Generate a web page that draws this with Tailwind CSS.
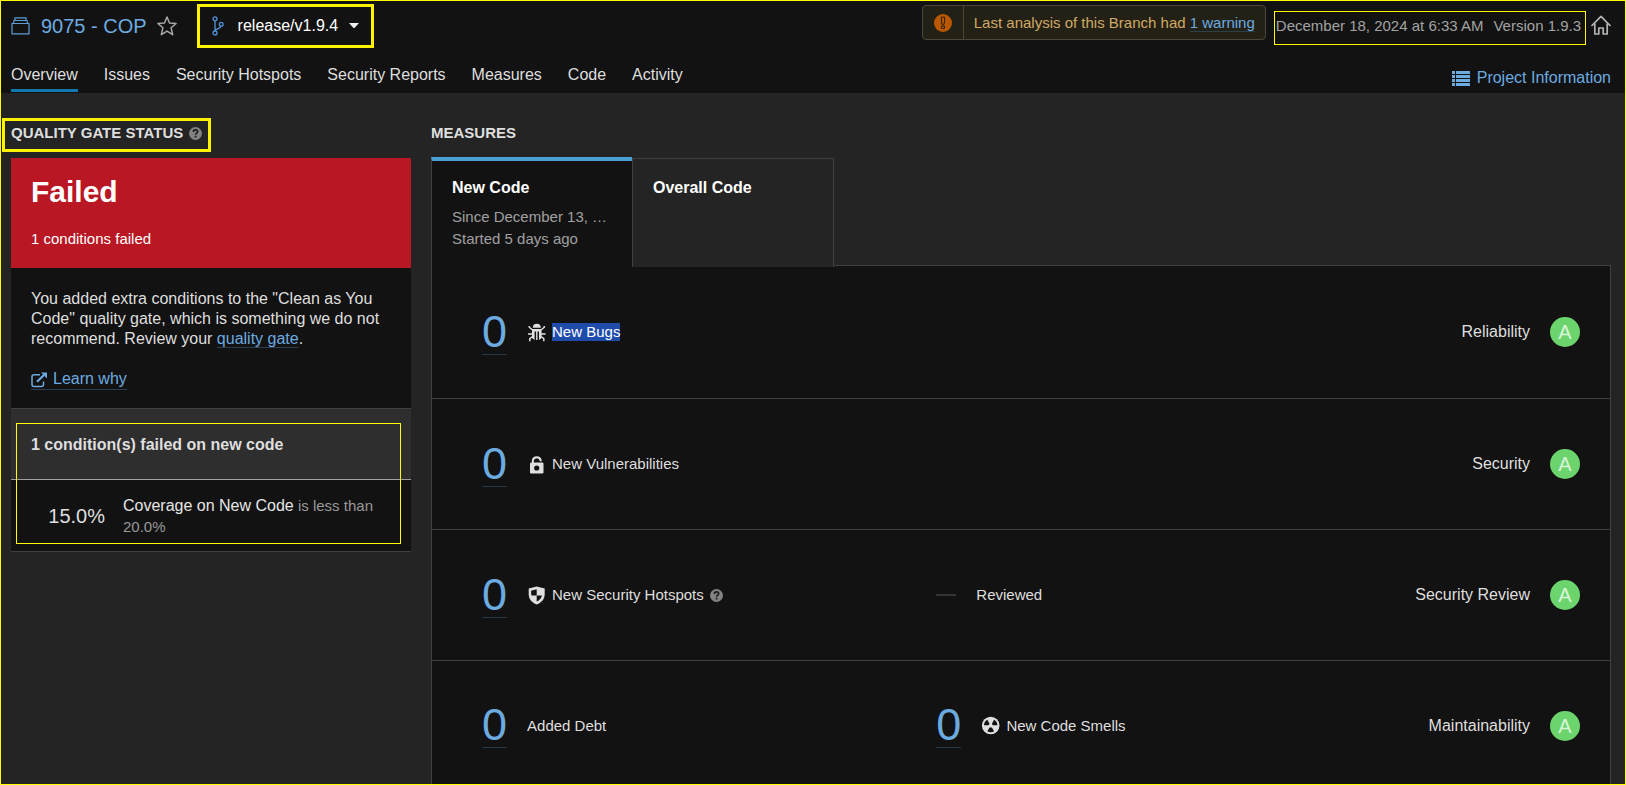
<!DOCTYPE html>
<html lang="en">
<head>
<meta charset="utf-8">
<meta name="viewport" content="width=device-width, initial-scale=1">
<title>9075 - COP</title>
<script src="https://cdn.jsdelivr.net/npm/@tailwindcss/browser@4"></script>
</head>
<body class="bg-[#242424] font-['Liberation_Sans',Arial,sans-serif] text-base text-[#dfdfdf]">
<svg class="hidden" aria-hidden="true">
  <symbol id="help" viewBox="0 0 13 13">
    <circle cx="6.5" cy="6.5" r="6.5" fill="#828282"/>
    <path d="M4.4 4.9C4.4 3.6 5.3 2.9 6.5 2.9S8.7 3.7 8.7 4.7C8.7 6.1 6.6 6.1 6.6 7.7" fill="none" stroke="#1c1c1c" stroke-width="1.6"/>
    <path d="M5.7 8.8h1.8v1.7H5.7z" fill="#1c1c1c"/>
  </symbol>
</svg>
<div class="flex min-h-screen flex-col border border-[#ffff00]">
  <header class="bg-[#121212] px-2.5">
    <div class="flex h-12 justify-between">
      <div class="flex h-[49px] items-center">
        <svg class="mr-[11px] h-[18px] w-[19px]" viewBox="0 0 19 18" fill="none" stroke="#5d9bd3" stroke-width="1.2">
          <path d="M1 6.5h17v10.4H1zM2.4 6.500L3 3.500h13l.6 3M4 3.500V.8h11v2.700"/>
        </svg>
        <a href="#" class="text-xl text-[#6cabe0]">9075 - COP</a>
        <button type="button" aria-label="Add to favorites" class="ml-2.5">
          <svg class="size-5" viewBox="0 0 20 20" fill="none" stroke="#a8a8a8" stroke-width="1.5" stroke-linejoin="round">
            <path d="M10 1l2.5 6 6.600.5-5 4.300 1.600 6.900L10 15.100l-5.700 3.600 1.600-6.900-5-4.300L7.500 7z"/>
          </svg>
        </button>
        <button type="button" class="ml-5 flex h-11 items-center border-[3px] border-[#fff200] px-3">
          <svg class="mr-3.5 h-5 w-3" viewBox="0 0 12 20" fill="none" stroke="#4f93d8" stroke-width="1.300">
            <circle cx="3" cy="2.800" r="2"/><circle cx="3" cy="17" r="2"/><circle cx="9.200" cy="8.300" r="1.900"/>
            <path d="M3 4.800V15M9 10.200C8.600 13 4.500 12.300 3.200 14.800"/>
          </svg>
          <span class="text-white">release/v1.9.4</span>
          <svg class="ml-[11px] h-[5px] w-[10px]" viewBox="0 0 10 5" fill="#f0f0f0"><path d="M0 0h10L5.500 5h-1z"/></svg>
        </button>
      </div>
      <div class="flex items-start text-[15px]">
        <div class="mt-1 flex h-[35px] rounded-sm border border-[#4b483a] bg-[#232015]">
          <div class="flex w-[41px] items-center justify-center border-r border-[#4b483a]">
            <svg class="size-[18px]" viewBox="0 0 18 18"><circle cx="9" cy="9" r="9" fill="#b95800"/><path d="M7.300 3.200h3.400L10.200 10.300H7.800zM7.600 12h2.800v2.400H7.600z" fill="none" stroke="#2a1c0c" stroke-width="1"/></svg>
          </div>
          <p class="px-2.5 pt-2 leading-[18px] text-[#d0a964]">Last analysis of this Branch had <a href="#" class="inline-block border-b border-[#2b414a] leading-[17px] text-[#6cabe0]">1 warning</a></p>
        </div>
        <div class="mt-2.5 ml-2 flex h-[34px] gap-2.5 border border-[#ffff00] pt-[5px] pr-1 pl-px leading-[18px] text-[#a3a3a3]">
          <time datetime="2024-12-18T06:33">December 18, 2024 at 6:33 AM</time>
          <span>Version 1.9.3</span>
        </div>
        <a href="#" aria-label="Home" class="mt-3.5 mr-1 ml-[5px]">
          <svg class="size-5" viewBox="0 0 20 20" fill="none" stroke="#b4b4b4" stroke-width="1.700" stroke-linejoin="round" stroke-linecap="round">
            <path d="M1 10.500L10 1.300l9 9.200M3.800 8.500V19h4v-6h4.400v6h4V8.500"/>
          </svg>
        </a>
      </div>
    </div>
    <div class="flex h-11 items-end justify-between pb-px">
      <nav class="flex gap-[26px] leading-[18px]">
        <a href="#" aria-current="page" class="border-b-[3px] border-[#1279b0] pb-[5px]">Overview</a>
        <a href="#">Issues</a>
        <a href="#">Security Hotspots</a>
        <a href="#">Security Reports</a>
        <a href="#">Measures</a>
        <a href="#">Code</a>
        <a href="#">Activity</a>
      </nav>
      <a href="#" class="mr-1 flex items-center gap-[7px] pb-[5px] leading-[18px] text-[#6cabe0]">
        <svg class="h-[15px] w-[18px]" viewBox="0 0 18 15" fill="#6cabe0"><path d="M0 0h3v3H0zM4 0h14v3H4zM0 4h3v3H0zM4 4h14v3H4zM0 8h3v3H0zM4 8h14v3H4zM0 12h3v3H0zM4 12h14v3H4z"/></svg>
        Project Information
      </a>
    </div>
  </header>

  <main class="flex flex-1 gap-5 pr-3.5 pl-2.5">
    <section class="w-[400px] shrink-0 pt-[25px]">
      <h2 class="-ml-[9px] flex h-[34px] w-[209px] items-center gap-1.5 border-[3px] border-[#fff200] pb-1 pl-1.5 text-[15px] leading-[18px] font-bold whitespace-nowrap">QUALITY GATE STATUS
        <svg class="size-[13px] shrink-0"><use href="#help"/></svg>
      </h2>
      <div class="mt-1.5 h-[110px] bg-[#b81723] px-5 pt-4 text-white">
        <p class="text-[30px] leading-9 font-bold">Failed</p>
        <p class="mt-5 text-[15px] leading-[18px]">1 conditions failed</p>
      </div>
      <div class="bg-[#121212] px-5 pt-[21px] pb-[18px] leading-5">
        <p>You added extra conditions to the "Clean as You Code" quality gate, which is something we do not recommend. Review your <a href="#" class="border-b border-[#2b3f54] text-[#6cabe0]">quality gate</a>.</p>
        <div class="mt-5 flex">
          <a href="#" class="flex items-center gap-1.5 border-b border-[#2b3f54] text-[#6cabe0]">
            <svg class="mt-0.5 size-4" viewBox="0 0 16 16" fill="none" stroke="#6cabe0" stroke-width="1.500"><path d="M9 2.800H3A2 2 0 0 0 1 4.800V12.500A2 2 0 0 0 3 14.500H10.500A2 2 0 0 0 12.500 12.500V9.500"/><path d="M6 9.800L13 3" stroke-width="2.200"/><path d="M10 .6h6v6z" fill="#6cabe0" stroke="none"/></svg>
            Learn why
          </a>
        </div>
      </div>
      <div class="relative">
        <h3 class="border-t border-b border-t-[#404040] border-b-[#a0a0a0] bg-[#2e2e2e] px-5 pt-[26px] pb-6 leading-5 font-bold">1 condition(s) failed on new code</h3>
        <div class="flex items-center border-b border-[#404040] bg-[#121212] pt-[15px] pr-5 pb-3.5">
          <span class="w-[94px] shrink-0 text-right text-xl">15.0%</span>
          <p class="ml-[18px] text-[15px] leading-[21px] text-[#999999]"><span class="text-base leading-[21px] text-[#e6e6e6]">Coverage on New Code</span> is less than 20.0%</p>
        </div>
        <div class="pointer-events-none absolute top-[15px] right-2.5 bottom-2 left-[5px] border border-[#ffff00]"></div>
      </div>
    </section>

    <section class="flex min-w-0 flex-1 flex-col">
      <h2 class="mt-[31px] mb-[15px] text-[15px] leading-[18px] font-bold">MEASURES</h2>
      <div role="tablist" class="relative z-10 -mb-0.5 flex h-[110px] items-end">
        <button type="button" role="tab" aria-selected="true" class="flex h-[110px] w-[201px] flex-col border-t-4 border-l border-t-[#4b9fd5] border-l-[#404040] bg-[#121212] px-5 pt-[18px] text-left">
          <span class="leading-[18px] font-bold text-white">New Code</span>
          <span class="mt-[9px] text-[15px] leading-[22px] text-[#a0a0a0]">Since December 13, …</span>
          <span class="text-[15px] leading-[22px] text-[#a0a0a0]">Started 5 days ago</span>
        </button>
        <button type="button" role="tab" aria-selected="false" class="flex h-[109px] w-[202px] border border-b-0 border-[#404040] bg-[#242424] px-5 pt-5 text-left">
          <span class="leading-[18px] font-bold text-white">Overall Code</span>
        </button>
      </div>
      <div class="flex-1 border border-b-0 border-[#404040] bg-[#121212]">
        <div class="flex h-[133px] items-center border-b border-[#404040] pr-[30px] pl-[50px]">
          <div class="grid flex-1 grid-cols-[12fr_17fr] items-center">
            <div class="flex items-center gap-5">
              <a href="#" class="border-b border-[#243848] text-[45px] leading-[44px] text-[#6cabe0]">0</a>
              <div class="flex items-center gap-1.5 text-[15px] leading-[18px]">
                <svg class="size-[19px]" viewBox="0 0 19 19" fill="#dfdfdf"><path d="M5.800 4.700a4 4 0 0 1 8 0z"/><path d="M5 6h9.600v9L12 17V8.500h-1.500V17H9.100V8.500H7.600V17L5 15z"/><path d="M2.300 3v1.200l3 2.600M17.300 3v1.200l-3 2.600M1 11h4.500M18.600 11h-4.500M5.500 13.500L2.800 15.600v2.600M14.100 13.500l2.700 2.100v2.600" fill="none" stroke="#dfdfdf" stroke-width="1.500"/></svg>
                <span class="bg-[#1f4cab] text-white">New Bugs</span>
              </div>
            </div>
            <div class="flex items-center justify-end gap-5">Reliability<span class="flex size-[30px] items-center justify-center rounded-full bg-[#6cd46c] text-xl leading-7 text-[#d8f5d8]">A</span></div>
          </div>
        </div>
        <div class="flex h-[131px] items-center border-b border-[#404040] pr-[30px] pl-[50px]">
          <div class="grid flex-1 grid-cols-[12fr_17fr] items-center">
            <div class="flex items-center gap-5">
              <a href="#" class="border-b border-[#243848] text-[45px] leading-[44px] text-[#6cabe0]">0</a>
              <div class="flex items-center gap-1.5 text-[15px] leading-[18px]">
                <svg class="size-[19px]" viewBox="0 0 19 19"><path d="M5.800 9V5.500a4 4 0 0 1 7.900 0v.8" fill="none" stroke="#dfdfdf" stroke-width="2"/><rect x="3" y="7.500" width="13.500" height="11" rx="1.300" fill="#dfdfdf"/><circle cx="9.700" cy="13" r="2.600" fill="#121212"/></svg>
                New Vulnerabilities
              </div>
            </div>
            <div class="flex items-center justify-end gap-5">Security<span class="flex size-[30px] items-center justify-center rounded-full bg-[#6cd46c] text-xl leading-7 text-[#d8f5d8]">A</span></div>
          </div>
        </div>
        <div class="flex h-[131px] items-center border-b border-[#404040] pr-[30px] pl-[50px]">
          <div class="grid flex-1 grid-cols-[12fr_17fr] items-center">
            <div class="flex items-center gap-5">
              <a href="#" class="border-b border-[#243848] text-[45px] leading-[44px] text-[#6cabe0]">0</a>
              <div class="flex items-center gap-1.5 text-[15px] leading-[18px]">
                <svg class="size-[19px]" viewBox="0 0 19 19"><path d="M9.700.5l8 2V8c0 5-3 8.500-8 10.500-5-2-8-5.500-8-10.500V2.500z" fill="#dfdfdf"/><path d="M9.700 3.300V9.500H4.500Q4.100 8 4.100 4.800zM9.700 9.500h5.200q-.9 4-5.200 6z" fill="#121212"/></svg>
                New Security Hotspots
                <svg class="size-[13px]"><use href="#help"/></svg>
              </div>
            </div>
            <div class="flex items-center justify-between">
              <div class="flex items-center gap-5 text-[15px] leading-[18px]"><span class="h-0.5 w-5 bg-[#353535]"></span>Reviewed</div>
              <div class="flex items-center gap-5">Security Review<span class="flex size-[30px] items-center justify-center rounded-full bg-[#6cd46c] text-xl leading-7 text-[#d8f5d8]">A</span></div>
            </div>
          </div>
        </div>
        <div class="flex h-[123px] items-start pt-[42px] pr-[30px] pl-[50px]">
          <div class="grid flex-1 grid-cols-[12fr_17fr] items-center">
            <div class="flex items-center gap-5">
              <a href="#" class="border-b border-[#243848] text-[45px] leading-[44px] text-[#6cabe0]">0</a>
              <span class="text-[15px] leading-[18px]">Added Debt</span>
            </div>
            <div class="flex items-center justify-between">
              <div class="flex items-center gap-5">
                <a href="#" class="border-b border-[#243848] text-[45px] leading-[44px] text-[#6cabe0]">0</a>
                <div class="flex items-center gap-1.5 text-[15px] leading-[18px]">
                  <svg class="size-[19px]" viewBox="0 0 19 19"><circle cx="9.700" cy="9.500" r="8.800" fill="#dfdfdf"/><path d="M3 9.300A6.700 6.700 0 0 1 6.300 3.700L8.500 7.800 7.600 9.300zM16.400 9.300A6.700 6.700 0 0 0 13.100 3.700L10.900 7.800 11.800 9.300zM6.300 15.300L8.500 11.600h2.400L13.100 15.300A6.700 6.700 0 0 1 6.300 15.300z" fill="#121212"/></svg>
                  New Code Smells
                </div>
              </div>
              <div class="flex items-center gap-5">Maintainability<span class="flex size-[30px] items-center justify-center rounded-full bg-[#6cd46c] text-xl leading-7 text-[#d8f5d8]">A</span></div>
            </div>
          </div>
        </div>
      </div>
    </section>
  </main>
</div>
</body>
</html>
